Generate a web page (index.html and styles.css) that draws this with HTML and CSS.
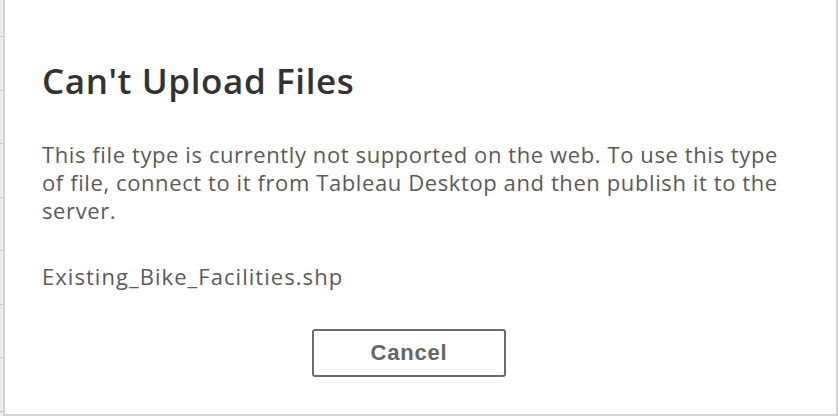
FILE: index.html
```html
<!DOCTYPE html>
<html>
<head>
<meta charset="utf-8">
<link rel="stylesheet" href="styles.css">
</head>
<body>
<div class="page">
  <div class="backdrop"></div>
  <div class="dialog">
    <h1 class="title">Can't Upload Files</h1>
    <p class="message">This file type is currently not supported on the web. To use this type of file, connect to it from Tableau Desktop and then publish it to the server.</p>
    <p class="filename">Existing_Bike_Facilities.shp</p>
    <div class="actions">
      <button class="btn">Cancel</button>
    </div>
  </div>
</div>
</body>
</html>
```

FILE: styles.css
```css
html, body {
  margin: 0;
  padding: 0;
  background: #ffffff;
}
.page {
  display: flex;
  width: 838px;
  height: 416px;
  overflow: hidden;
}
.backdrop {
  width: 3px;
  flex: none;
  background-color: #ececec;
  background-image: repeating-linear-gradient(to bottom, transparent 0, transparent 36px, #c8c8c8 36px, #c8c8c8 37px, transparent 37px, transparent 53.5px);
}
.dialog {
  box-sizing: border-box;
  width: 835px;
  height: 416px;
  border: 2px solid #d4d4d4;
  border-top: none;
  background: #ffffff;
  padding: 0 40px 0 37px;
  display: flex;
  flex-direction: column;
  font-family: "Open Sans", Roboto, sans-serif;
}
.title {
  margin: 60px 0 0;
  font-size: 35px;
  line-height: 42px;
  font-weight: 600;
  letter-spacing: 0.6px;
  color: #333333;
}
.message {
  margin: 38px 0 0;
  font-size: 22px;
  line-height: 28px;
  font-weight: 400;
  letter-spacing: 0.6px;
  color: #5a5a5a;
}
.filename {
  margin: 38px 0 0;
  font-size: 22px;
  line-height: 28px;
  font-weight: 400;
  letter-spacing: 1.05px;
  color: #5a5a5a;
}
.actions {
  display: flex;
  justify-content: center;
  margin-top: 39px;
}
.btn {
  width: 194px;
  height: 48px;
  box-sizing: border-box;
  border: 2px solid #6b6b6b;
  border-radius: 3px;
  background: #ffffff;
  font-family: "Liberation Sans", Arial, sans-serif;
  font-weight: 700;
  font-size: 22px;
  letter-spacing: 0.8px;
  color: #666666;
  margin-left: -20px;
  padding: 0;
}
```
